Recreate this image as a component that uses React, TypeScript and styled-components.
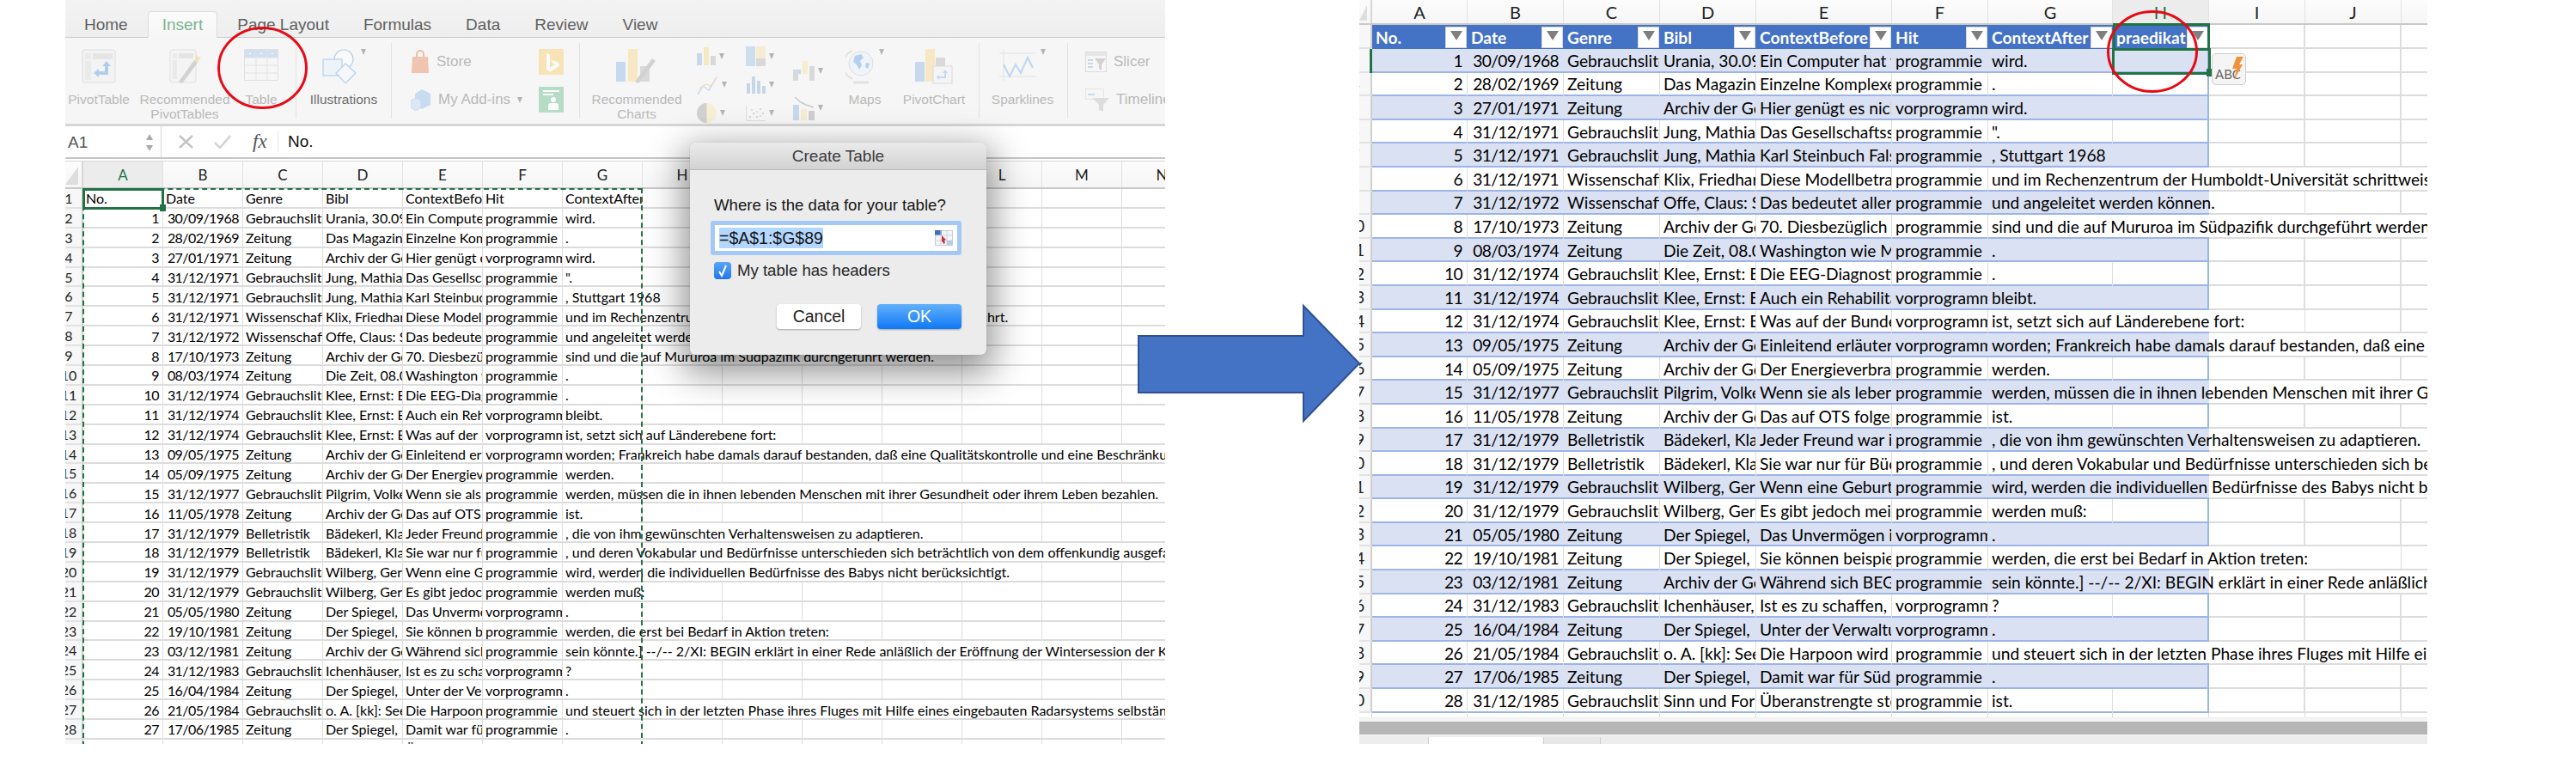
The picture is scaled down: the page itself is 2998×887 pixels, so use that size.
import React from 'react'
import styled, { createGlobalStyle } from 'styled-components'

const GlobalStyle = createGlobalStyle`
	html,
	body {
		margin: 0;
		padding: 0;
		background: #fff;
	}
	* {
		box-sizing: border-box;
	}
`

const UI_FONT = '"Liberation Sans", Arial, sans-serif'
const CELL_FONT = 'Lato, "Liberation Sans", sans-serif'
const GREEN = '#217346'
const GRID = '#dcdcdc'

type DataRow = [string, string, string, string, string, string]

const G = 'Gebrauchsliteratur'
const Z = 'Zeitung'
const W = 'Wissenschaft'
const B = 'Belletristik'
const P = 'programmie'
const V = 'vorprogramm'

const rows: DataRow[] = [
	['30/09/1968', G, 'Urania, 30.09.1968', 'Ein Computer hat w', P, 'wird.'],
	['28/02/1969', Z, 'Das Magazin, 1969', 'Einzelne Komplexe', P, '.'],
	['27/01/1971', Z, 'Archiv der Gegenwart', 'Hier genügt es nicht', V, 'wird.'],
	['31/12/1971', G, 'Jung, Mathias', 'Das Gesellschaftssystem', P, '".'],
	['31/12/1971', G, 'Jung, Mathias', 'Karl Steinbuch Falsch', P, ', Stuttgart 1968'],
	['31/12/1971', W, 'Klix, Friedhart', 'Diese Modellbetrachtung', P, 'und im Rechenzentrum der Humboldt-Universität schrittweise eingeführt.'],
	['31/12/1972', W, 'Offe, Claus: Strukturprobleme', 'Das bedeutet allerdings', P, 'und angeleitet werden können.'],
	['17/10/1973', Z, 'Archiv der Gegenwart', '70. Diesbezüglich wird', P, 'sind und die auf Mururoa im Südpazifik durchgeführt werden.'],
	['08/03/1974', Z, 'Die Zeit, 08.03.1974', 'Washington wie Moskau', P, '.'],
	['31/12/1974', G, 'Klee, Ernst: Euthanasie', 'Die EEG-Diagnostik', P, '.'],
	['31/12/1974', G, 'Klee, Ernst: Euthanasie', 'Auch ein Rehabilitand', V, 'bleibt.'],
	['31/12/1974', G, 'Klee, Ernst: Euthanasie', 'Was auf der Bundesebene', V, 'ist, setzt sich auf Länderebene fort:'],
	['09/05/1975', Z, 'Archiv der Gegenwart', 'Einleitend erläuterte', V, 'worden; Frankreich habe damals darauf bestanden, daß eine Qualitätskontrolle und eine Beschränkung'],
	['05/09/1975', Z, 'Archiv der Gegenwart', 'Der Energieverbrauch', P, 'werden.'],
	['31/12/1977', G, 'Pilgrim, Volker', 'Wenn sie als lebendige', P, 'werden, müssen die in ihnen lebenden Menschen mit ihrer Gesundheit oder ihrem Leben bezahlen.'],
	['11/05/1978', Z, 'Archiv der Gegenwart', 'Das auf OTS folgende', P, 'ist.'],
	['31/12/1979', B, 'Bädekerl, Klaus', 'Jeder Freund war ihr', P, ', die von ihm gewünschten Verhaltensweisen zu adaptieren.'],
	['31/12/1979', B, 'Bädekerl, Klaus', 'Sie war nur für Bücher', P, ', und deren Vokabular und Bedürfnisse unterschieden sich beträchtlich von dem offenkundig ausgefallenen'],
	['31/12/1979', G, 'Wilberg, Gerlinde', 'Wenn eine Geburt so', P, 'wird, werden die individuellen Bedürfnisse des Babys nicht berücksichtigt.'],
	['31/12/1979', G, 'Wilberg, Gerlinde', 'Es gibt jedoch meist', P, 'werden muß:'],
	['05/05/1980', Z, 'Der Spiegel,', 'Das Unvermögen ist', V, '.'],
	['19/10/1981', Z, 'Der Spiegel,', 'Sie können beispielsweise', P, 'werden, die erst bei Bedarf in Aktion treten:'],
	['03/12/1981', Z, 'Archiv der Gegenwart', 'Während sich BEGIN', P, 'sein könnte.] --/-- 2/XI: BEGIN erklärt in einer Rede anläßlich der Eröffnung der Wintersession der Knesset'],
	['31/12/1983', G, 'Ichenhäuser,', 'Ist es zu schaffen, dass', V, '?'],
	['16/04/1984', Z, 'Der Spiegel,', 'Unter der Verwaltung', V, '.'],
	['21/05/1984', G, 'o. A. [kk]: Seekrieg', 'Die Harpoon wird vor', P, 'und steuert sich in der letzten Phase ihres Fluges mit Hilfe eines eingebauten Radarsystems selbständig'],
	['17/06/1985', Z, 'Der Spiegel,', 'Damit war für Südafrika', P, '.'],
	['31/12/1985', G, 'Sinn und Form, 1985', 'Überanstrengte stets', P, 'ist.'],
]

const measureCtx = document.createElement('canvas').getContext('2d')

const textWidth = (text: string, size: number) => {
	if (!measureCtx) return text.length * size * 0.46
	measureCtx.font = `${size}px Lato`
	return measureCtx.measureText(text).width
}

const Page = styled.div`
	position: relative;
	display: flex;
	width: 2998px;
	height: 887px;
	padding-left: 76px;
	gap: 226px;
	overflow: hidden;
	background: #fff;
`

const LeftPanel = styled.div`
	position: relative;
	flex: none;
	width: 1280px;
	height: 866px;
	overflow: hidden;
	display: flex;
	flex-direction: column;
	font-family: ${UI_FONT};
`

const RightPanel = styled.div`
	position: relative;
	flex: none;
	width: 1243px;
	height: 866px;
	overflow: hidden;
	display: flex;
	flex-direction: column;
`

/* ---------- ribbon ---------- */

const TabBar = styled.div`
	flex: none;
	height: 44px;
	display: flex;
	align-items: flex-end;
	gap: 6px;
	padding-left: 5px;
	background: linear-gradient(#f3f3f3, #eeeeee);
	border-bottom: 1px solid #c9c9c9;
`

const Tab = styled.div<{ $active?: boolean }>`
	height: ${(p) => (p.$active ? '31px' : '30px')};
	padding: 0 16px;
	font-size: 19px;
	line-height: 30px;
	margin-bottom: ${(p) => (p.$active ? '-1px' : '0')};
	color: ${(p) => (p.$active ? '#7db391' : '#616161')};
	background: ${(p) => (p.$active ? 'linear-gradient(#fbfbfb, #f6f6f6)' : 'none')};
	border: 1px solid ${(p) => (p.$active ? '#dcdcdc' : 'transparent')};
	border-bottom: none;
	border-radius: 4px 4px 0 0;
`

const Ribbon = styled.div`
	flex: none;
	height: 103px;
	display: flex;
	background: #f6f6f6;
	border-bottom: 3px solid #d6d6d6;
`

const LargeItem = styled.div<{ $w: number }>`
	flex: none;
	width: ${(p) => p.$w}px;
	padding-top: 13px;
	text-align: center;
	font-size: 15.5px;
	line-height: 17px;
	color: #b9b9b9;
`

const LargeIcon = styled.div`
	height: 50px;
	display: flex;
	justify-content: center;
	align-items: flex-start;
	gap: 5px;
`

const ItemLabel = styled.div<{ $dark?: boolean }>`
	white-space: nowrap;
	color: ${(p) => (p.$dark ? '#6e6e6e' : '#b9b9b9')};
`

const RibbonSep = styled.div<{ $w: number }>`
	flex: none;
	width: ${(p) => p.$w}px;
	display: flex;
	justify-content: center;
	padding: 6px 0;
	&::before {
		content: '';
		width: 1px;
		background: #e2e2e2;
	}
`

const SmallColumn = styled.div<{ $w: number; $pad: number }>`
	flex: none;
	width: ${(p) => p.$w}px;
	padding-left: ${(p) => p.$pad}px;
	padding-top: 13px;
	display: flex;
	flex-direction: column;
	gap: 14px;
`

const SmallItem = styled.div`
	height: 30px;
	display: flex;
	align-items: center;
	gap: 8px;
	font-size: 17px;
	color: #b9b9b9;
	white-space: nowrap;
`

const ChartColumn = styled.div<{ $w: number; $top: number; $rowH: number; $left?: number }>`
	flex: none;
	width: ${(p) => p.$w}px;
	padding-top: ${(p) => p.$top}px;
	padding-left: ${(p) => p.$left || 0}px;
	display: grid;
	grid-auto-rows: ${(p) => p.$rowH}px;
	align-content: start;
`

const ChartItem = styled.div`
	display: flex;
	align-items: center;
	gap: 4px;
`

const Caret = styled.span`
	flex: none;
	width: 0;
	height: 0;
	border-left: 3.5px solid transparent;
	border-right: 3.5px solid transparent;
	border-top: 7px solid #b4b4b4;
`

const FadedIcon = styled.svg`
	flex: none;
	display: block;
	opacity: 0.62;
`

/* ---------- formula bar ---------- */

const FormulaBar = styled.div`
	flex: none;
	height: 36px;
	display: flex;
	align-items: center;
	background: #fff;
`

const NameBox = styled.div`
	flex: none;
	width: 112px;
	height: 100%;
	display: flex;
	align-items: center;
	justify-content: space-between;
	padding: 2px 9px 0 3px;
	font-size: 19px;
	color: #555;
	border-right: 1px solid #d6d6d6;
`

const Stepper = styled.div`
	display: flex;
	flex-direction: column;
	gap: 6px;
`

const StepArrow = styled.span<{ $up?: boolean }>`
	width: 0;
	height: 0;
	border-left: 4.5px solid transparent;
	border-right: 4.5px solid transparent;
	border-top: ${(p) => (p.$up ? 'none' : '7px solid #aaa')};
	border-bottom: ${(p) => (p.$up ? '7px solid #aaa' : 'none')};
`

const FormulaActions = styled.div`
	flex: none;
	width: 136px;
	height: 24px;
	display: flex;
	align-items: center;
	gap: 24px;
	padding-left: 20px;
	border-right: 1px solid #e4e4e4;
`

const FxLabel = styled.span`
	font-family: 'Liberation Serif', serif;
	font-style: italic;
	font-size: 23px;
	color: #555;
	margin-left: 1px;
`

const FormulaText = styled.div`
	padding-left: 11px;
	font-size: 19px;
	color: #111;
`

const FormulaRule = styled.div`
	flex: none;
	height: 5px;
	border-top: 2px solid #c6c6c6;
	border-bottom: 1px solid #d8d8d8;
`

/* ---------- sheet ---------- */

const HeaderStrip = styled.div<{ $h: number; $cols: string }>`
	flex: none;
	height: ${(p) => p.$h}px;
	display: grid;
	grid-template-columns: ${(p) => p.$cols};
	background: linear-gradient(#fcfcfc, #f6f6f6);
	border-bottom: 2px solid #c9c9c9;
`

const Corner = styled.div`
	position: relative;
	overflow: hidden;
	border-right: 2px solid #d6d6d6;
	padding: 6px 4px 3px 0;
	display: flex;
	&::before {
		content: '';
		flex: 1;
		background: #dedede;
		clip-path: polygon(100% 0, 100% 100%, 0 100%);
	}
`

const ColumnLetter = styled.div<{ $size: number; $active?: boolean }>`
	display: flex;
	align-items: center;
	justify-content: center;
	font-family: ${CELL_FONT};
	font-size: ${(p) => p.$size}px;
	color: ${(p) => (p.$active ? GREEN : '#222')};
	background: ${(p) => (p.$active ? '#ececec' : 'none')};
	border-right: 1px solid #e2e2e2;
`

const RowArea = styled.div`
	position: relative;
	flex: none;
`

const SheetRow = styled.div<{ $h: number; $cols: string; $head: number; $table: number; $band?: boolean }>`
	height: ${(p) => p.$h}px;
	display: grid;
	grid-template-columns: ${(p) => p.$cols};
	background:
		${(p) =>
			p.$table
				? `linear-gradient(#9db5e4, #9db5e4) ${p.$head}px 100% / ${p.$table}px 2px no-repeat,`
				: ''}
		${(p) =>
			p.$band ? `linear-gradient(#dae1f2, #dae1f2) ${p.$head}px 0 / ${p.$table}px 100% no-repeat,` : ''}
		linear-gradient(${GRID}, ${GRID}) 0 100% / 100% 2px no-repeat;
`

const RowHead = styled.div<{ $size: number }>`
	display: flex;
	align-items: center;
	overflow: hidden;
	font-family: ${CELL_FONT};
	font-size: ${(p) => p.$size}px;
	color: #222;
	background: #f7f7f7;
	border-right: 2px solid #cfcfcf;
	border-bottom: 2px solid #e2e2e2;
`

const RowNumber = styled.span<{ $center: number }>`
	flex: none;
	width: 40px;
	margin-left: ${(p) => p.$center - 20}px;
	text-align: center;
`

const Cell = styled.div<{ $size: number; $right?: boolean; $line: string; $span?: number; $edge?: boolean }>`
	grid-column: span ${(p) => p.$span || 1};
	display: flex;
	align-items: center;
	justify-content: ${(p) => (p.$right ? 'flex-end' : 'flex-start')};
	min-width: 0;
	padding: 0 ${(p) => Math.round(p.$size * 0.24)}px 1px ${(p) => Math.round(p.$size * 0.2)}px;
	overflow: hidden;
	white-space: nowrap;
	font-family: ${CELL_FONT};
	font-size: ${(p) => p.$size}px;
	letter-spacing: ${(p) => (p.$right ? '-0.035em' : 'normal')};
	color: #000;
	border-right: ${(p) => (p.$edge ? 2 : 1)}px solid ${(p) => p.$line};
`

const TableHeaderRow = styled.div<{ $cols: string }>`
	flex: none;
	height: 28px;
	display: grid;
	grid-template-columns: ${(p) => p.$cols};
	background: linear-gradient(${GRID}, ${GRID}) 0 100% / 100% 2px no-repeat;
`

const TableHeaderCell = styled.div`
	display: flex;
	align-items: center;
	justify-content: space-between;
	min-width: 0;
	padding-left: 4px;
	padding-right: 1px;
	overflow: hidden;
	white-space: nowrap;
	font-family: ${CELL_FONT};
	font-size: 19.2px;
	font-weight: 700;
	color: #fff;
	background: #4472c4;
`

const HeaderText = styled.span`
	flex: 1;
	min-width: 0;
	overflow: hidden;
`

const FilterButton = styled.span`
	flex: none;
	width: 25px;
	height: 25px;
	display: flex;
	align-items: center;
	justify-content: center;
	background: #fff;
	border: 1px solid #d8d8d8;
	&::before {
		content: '';
		margin-top: -3px;
		border-left: 7px solid transparent;
		border-right: 7px solid transparent;
		border-top: 11px solid #7f7f7f;
	}
`

const MarchingAnts = styled.div`
	position: absolute;
	top: -1px;
	left: 20px;
	width: 652px;
	height: 660px;
	border: 2px dashed ${GREEN};
`

const ActiveCell = styled.div`
	position: absolute;
	top: -1px;
	left: 20px;
	width: 95px;
	height: 25px;
	border: 3px solid ${GREEN};
	&::after {
		content: '';
		position: absolute;
		right: -5px;
		bottom: -5px;
		width: 7px;
		height: 8px;
		background: ${GREEN};
	}
`

const HeaderOutline = styled.div`
	position: absolute;
	top: 27px;
	left: 877px;
	width: 113px;
	height: 30px;
	border: 3px solid ${GREEN};
	border-bottom: none;
`

const SelectedCell = styled.div`
	position: absolute;
	top: 56px;
	left: 876px;
	width: 115px;
	height: 31px;
	border: 3px solid ${GREEN};
	&::after {
		content: '';
		position: absolute;
		right: -5px;
		bottom: -5px;
		width: 7px;
		height: 9px;
		background: ${GREEN};
	}
`

const LeadBar = styled.div`
	position: absolute;
	top: 57px;
	left: 12px;
	width: 3px;
	height: 28px;
	background: ${GREEN};
`

const AutoCorrect = styled.div`
	position: absolute;
	top: 62px;
	left: 992px;
	width: 40px;
	height: 37px;
	overflow: hidden;
	display: flex;
	align-items: flex-end;
	padding: 0 0 3px 3px;
	font-family: ${CELL_FONT};
	font-size: 15px;
	color: #666;
	background: #f5f5f5;
	border: 1px solid #cdcdcd;
	border-radius: 5px;
	svg {
		position: absolute;
		top: 3px;
		left: 22px;
	}
`

const GapRow = styled.div<{ $cols: string }>`
	flex: none;
	height: 6px;
	display: grid;
	grid-template-columns: ${(p) => p.$cols};
	background: #fff;
	border-bottom: 1px solid #eeeeee;
`

const GapCell = styled.div`
	border-right: 1px solid #dcdcdc;
`

const ScrollGutter = styled.div`
	flex: none;
	height: 4px;
	background: #f5f5f5;
`

const ScrollBar = styled.div`
	flex: none;
	height: 15px;
	background: #b6b6b6;
`

const SheetTabs = styled.div`
	flex: 1;
	display: flex;
	align-items: flex-end;
	padding-left: 80px;
	background: #ededed;
	border-top: 1px solid #f8f8f8;
`

const SheetTab = styled.div<{ $w: number; $active?: boolean }>`
	width: ${(p) => p.$w}px;
	height: 8px;
	background: ${(p) => (p.$active ? '#fff' : '#e8e8e8')};
	border-right: 1px solid #cfcfcf;
	border-left: ${(p) => (p.$active ? '1px solid #cfcfcf' : 'none')};
`

/* ---------- dialog ---------- */

const Dialog = styled.div`
	position: absolute;
	left: 727px;
	top: 166px;
	width: 345px;
	height: 247px;
	display: flex;
	flex-direction: column;
	background: #ececec;
	border-radius: 6px;
	box-shadow: 0 0 1px rgba(0, 0, 0, 0.35), 0 14px 42px 8px rgba(0, 0, 0, 0.42);
	font-family: ${UI_FONT};
`

const DialogTitle = styled.div`
	flex: none;
	height: 32px;
	display: flex;
	align-items: center;
	justify-content: center;
	font-size: 19px;
	color: #3c3c3c;
	background: linear-gradient(#ebebeb, #d2d2d2);
	border-bottom: 1px solid #b9b9b9;
	border-radius: 6px 6px 0 0;
`

const DialogBody = styled.div`
	flex: 1;
	display: flex;
	flex-direction: column;
	padding: 30px 29px 30px 28px;
`

const Prompt = styled.div`
	font-size: 18.6px;
	line-height: 22px;
	color: #161616;
	white-space: nowrap;
`

const RangeField = styled.div`
	margin: 7px 0 0 -4px;
	height: 40px;
	display: flex;
	align-items: center;
	justify-content: space-between;
	padding: 0 5px;
	border: 5px solid #a4c9f6;
	border-radius: 3px;
	background: #fff;
`

const RangeValue = styled.span`
	font-size: 19.5px;
	line-height: 24px;
	color: #161616;
	background: #b3d7ff;
`

const CheckRow = styled.div`
	margin-top: 7px;
	display: flex;
	align-items: center;
	gap: 7px;
	font-size: 18.6px;
	color: #262626;
	white-space: nowrap;
`

const CheckBox = styled.span`
	flex: none;
	width: 20px;
	height: 20px;
	display: flex;
	align-items: center;
	justify-content: center;
	border-radius: 4px;
	background: linear-gradient(#5aa5f8, #2176f0);
`

const ButtonRow = styled.div`
	margin-top: auto;
	display: flex;
	justify-content: flex-end;
	gap: 19px;
`

const DialogButton = styled.div<{ $primary?: boolean }>`
	width: 98px;
	height: 29px;
	display: flex;
	align-items: center;
	justify-content: center;
	font-size: 19.5px;
	border-radius: 4px;
	color: ${(p) => (p.$primary ? '#fff' : '#222')};
	background: ${(p) => (p.$primary ? 'linear-gradient(#62b1fb, #0f78f6)' : '#fff')};
	box-shadow: 0 1px 2px rgba(0, 0, 0, 0.3);
`

/* ---------- annotations ---------- */

const Annotation = styled.svg<{ $x: number; $y: number }>`
	position: absolute;
	left: ${(p) => p.$x}px;
	top: ${(p) => p.$y}px;
	overflow: visible;
`

const RedRing = ({ x, y, w, h }: { x: number; y: number; w: number; h: number }) => (
	<Annotation $x={x} $y={y} width={w} height={h} viewBox={`0 0 ${w} ${h}`} fill="none">
		<ellipse cx={w / 2} cy={h / 2} rx={w / 2 - 1.5} ry={h / 2 - 1.5} stroke="#e60a14" strokeWidth={3} />
	</Annotation>
)

/* ---------- ribbon drawings ---------- */

const PivotIcon = () => (
	<FadedIcon width={40} height={40} viewBox="0 0 40 40">
		<rect x="1" y="1" width="38" height="38" rx="2" fill="#f2f2f2" stroke="#cfcfcf" />
		<rect x="13" y="5" width="23" height="7" fill="#dcdcdc" />
		<rect x="4" y="5" width="7" height="7" fill="#e3e3e3" />
		<rect x="4" y="14" width="7" height="22" fill="#e3e3e3" />
		<path d="M29 14l5 6h-3v10H20v3l-6-5 6-5v3h7v-6h-3z" fill="#86b6e6" />
	</FadedIcon>
)

const RecommendedIcon = () => (
	<FadedIcon width={40} height={40} viewBox="0 0 40 40">
		<rect x="3" y="1" width="30" height="38" rx="2" fill="#f4f4f4" stroke="#d4d4d4" />
		<rect x="13" y="5" width="17" height="6" fill="#dcdcdc" />
		<rect x="6" y="5" width="5" height="6" fill="#e3e3e3" />
		<rect x="6" y="13" width="5" height="22" fill="#e3e3e3" />
		<path d="M13 38l18-25 4 3-18 24z" fill="#bdbdbd" />
		<path d="M33 5l2 4 4 1-3 3-1 4-3-3z" fill="#f4d58a" />
	</FadedIcon>
)

const TableIcon = () => (
	<FadedIcon width={40} height={37} viewBox="0 0 40 37">
		<rect x="0.5" y="0.5" width="39" height="36" fill="#f7f7f7" stroke="#d4d4d4" />
		<rect x="1" y="1" width="38" height="9" fill="#b9d2f0" />
		<path d="M14 1v35M27 1v35M1 10h38M1 19h38M1 28h38" stroke="#d6d6d6" fill="none" />
		<path d="M7 4l1.5 2h-3zM20 4l1.5 2h-3zM33 4l1.5 2h-3z" fill="#fff" />
	</FadedIcon>
)

const ShapesIcon = () => (
	<FadedIcon width={40} height={40} viewBox="0 0 40 40">
		<circle cx="25" cy="12" r="11" fill="#fdfdfd" stroke="#8fb9e8" strokeWidth="1.2" />
		<rect x="1" y="12" width="22" height="19" fill="#eaf2fb" stroke="#8fb9e8" strokeWidth="1.2" />
		<path d="M27 17l12 11-12 12-11-12z" fill="#f5f9fd" stroke="#8fb9e8" strokeWidth="1.2" />
	</FadedIcon>
)

const BagIcon = () => (
	<FadedIcon width={22} height={28} viewBox="0 0 22 28">
		<path d="M7 9V5a4 4 0 018 0v4" fill="none" stroke="#e69a7d" strokeWidth="2" />
		<path d="M2 8h18l1 19H1z" fill="#eea488" />
	</FadedIcon>
)

const CubesIcon = () => (
	<FadedIcon width={24} height={25} viewBox="0 0 24 25">
		<path d="M13 0l10 5v13l-10 5-8-4V5z" fill="#aecbee" />
		<path d="M0 13l6-3 6 3v8l-6 4-6-4z" fill="#d0e1f5" stroke="#a8c6ea" />
	</FadedIcon>
)

const BingIcon = () => (
	<FadedIcon width={29} height={30} viewBox="0 0 29 30">
		<rect width="29" height="30" fill="#f9d98e" />
		<path d="M9 5l4 1.500v15l6-3.500-3-1.500-1.500-4 9 3.500v4L13 27l-4-3z" fill="#fff" />
	</FadedIcon>
)

const PeopleIcon = () => (
	<FadedIcon width={29} height={30} viewBox="0 0 29 30">
		<rect width="29" height="30" fill="#8fccab" />
		<path d="M5 5h19M5 9h12" stroke="#fff" strokeWidth="2" />
		<circle cx="17" cy="15" r="3" fill="#fff" />
		<path d="M11 27v-5a3 3 0 013-3h6a3 3 0 013 3v5z" fill="#fff" />
	</FadedIcon>
)

const RecommendedChartIcon = () => (
	<FadedIcon width={48} height={40} viewBox="0 0 48 40">
		<rect x="0" y="15" width="11" height="23" fill="#a9c8ec" />
		<rect x="14" y="0" width="11" height="38" fill="#f8dfa6" />
		<rect x="28" y="20" width="11" height="18" fill="#c8c8c8" />
		<path d="M22 38l20-27 4 3-20 26z" fill="#bdbdbd" />
	</FadedIcon>
)

const BarsIcon = () => (
	<FadedIcon width={22} height={21} viewBox="0 0 22 21">
		<rect x="0" y="7" width="6" height="14" fill="#a9c8ec" />
		<rect x="8" y="0" width="6" height="21" fill="#f8dfa6" />
		<rect x="16" y="10" width="6" height="11" fill="#c8c8c8" />
	</FadedIcon>
)

const StackIcon = () => (
	<FadedIcon width={23} height={23} viewBox="0 0 23 23">
		<rect x="0" y="0" width="11" height="23" fill="#b7cfea" />
		<rect x="12" y="0" width="11" height="14" fill="#f8e6bd" />
		<rect x="12" y="14" width="11" height="9" fill="#c8c8c8" />
	</FadedIcon>
)

const LineChartIcon = () => (
	<FadedIcon width={25} height={24} viewBox="0 0 25 24">
		<path d="M1 23l6-10 7 5 9-15" fill="none" stroke="#a9c8ec" strokeWidth="1.5" />
		<path d="M3 16l8-5 5 2 7-9" fill="none" stroke="#f3cf9c" strokeWidth="1.2" />
	</FadedIcon>
)

const ColumnIcon = () => (
	<FadedIcon width={23} height={20} viewBox="0 0 23 20">
		<path d="M1 20V8h4v12zM7 20V0h4v20zM13 20V5h4v15zM19 20v-9h4v9z" fill="#a9c3de" />
	</FadedIcon>
)

const PieIcon = () => (
	<FadedIcon width={23} height={23} viewBox="0 0 23 23">
		<circle cx="11.500" cy="11.500" r="11.500" fill="#faedc4" />
		<path d="M11.500 0a11.500 11.500 0 000 23z" fill="#bcbcbc" />
	</FadedIcon>
)

const ScatterIcon = () => (
	<FadedIcon width={23} height={18} viewBox="0 0 23 18">
		<path d="M.5 0v17.500H23" fill="none" stroke="#d4d4d4" />
		<path d="M4 12h2v2H4zM8 8h2v2H8zM12 12h2v2h-2zM16 3h2v2h-2zM19 8h2v2h-2z" fill="#a9c8ec" />
		<path d="M6 4h2v2H6zM12 6h2v2h-2zM16 11h2v2h-2z" fill="#f3cf9c" />
	</FadedIcon>
)

const WaterfallIcon = () => (
	<FadedIcon width={25} height={23} viewBox="0 0 25 23">
		<rect x="0" y="10" width="6" height="13" fill="#c8c8c8" />
		<rect x="6" y="10" width="3" height="5" fill="#a9c8ec" />
		<rect x="11" y="0" width="6" height="15" fill="#f8e6bd" />
		<rect x="19" y="6" width="6" height="17" fill="#c8c8c8" />
	</FadedIcon>
)

const ParetoIcon = () => (
	<FadedIcon width={25} height={28} viewBox="0 0 25 28">
		<rect x="0" y="10" width="7" height="18" fill="#a9c8ec" />
		<rect x="9" y="15" width="7" height="13" fill="#f8e6bd" />
		<rect x="18" y="17" width="7" height="11" fill="#b8b8b8" />
		<path d="M2 1l7 6 6 3 9 3" fill="none" stroke="#b0b0b0" strokeWidth="1.5" />
	</FadedIcon>
)

const GlobeIcon = () => (
	<FadedIcon width={34} height={41} viewBox="0 0 34 41">
		<path d="M8 2a18 18 0 000 33" fill="none" stroke="#d6d6d6" strokeWidth="2" />
		<circle cx="18" cy="17" r="14" fill="#eaf3fc" stroke="#d0d0d0" />
		<path d="M11 8l7-2 3 4-4 4 2 5-3 5-3-6-4-3zM24 16l4 1-2 6-3-2z" fill="#8cb9e8" />
		<path d="M9 39h18" stroke="#d6d6d6" strokeWidth="3" />
	</FadedIcon>
)

const PivotChartIcon = () => (
	<FadedIcon width={44} height={41} viewBox="0 0 44 41">
		<rect x="0" y="15" width="11" height="23" fill="#a9c8ec" />
		<rect x="12" y="0" width="11" height="38" fill="#f8dfa6" />
		<rect x="24" y="10" width="11" height="28" fill="#c8c8c8" />
		<rect x="21" y="20" width="22" height="20" fill="#f4f4f4" stroke="#c8c8c8" />
		<path d="M35 24l3 4h-2v6h-8v2l-3-3 3-3v2h6v-4h-2z" fill="#a9c8ec" />
	</FadedIcon>
)

const SparkIcon = () => (
	<FadedIcon width={43} height={37} viewBox="0 0 43 37">
		<path d="M5 0v37M0 5h43M0 32h43" stroke="#d6d6d6" fill="none" />
		<path d="M5 18l7 14 7-14 6 10 8-18 6 12" fill="none" stroke="#9cc3ec" strokeWidth="2" />
	</FadedIcon>
)

const SlicerIcon = () => (
	<FadedIcon width={25} height={24} viewBox="0 0 25 24">
		<rect x="0.500" y="0.500" width="24" height="23" fill="#f6f6f6" stroke="#cfcfcf" />
		<rect x="1" y="1" width="23" height="4" fill="#dcdcdc" />
		<path d="M3 9h6v2H3zM3 13h6v2H3zM3 17h6v2H3z" fill="#a9c8ec" />
		<path d="M11 8h13l-5 7v7l-3-2v-5z" fill="#bdbdbd" />
	</FadedIcon>
)

const TimelineIcon = () => (
	<FadedIcon width={28} height={27} viewBox="0 0 28 27">
		<rect x="0.500" y="0.500" width="21" height="12" fill="#f6f6f6" stroke="#dcdcdc" />
		<path d="M3 6h8v2H3z" fill="#a9c8ec" />
		<path d="M8 11h20l-7 8v8l-5-2v-6z" fill="#cfcfcf" />
	</FadedIcon>
)

const CrossIcon = () => (
	<svg width={17} height={16} viewBox="0 0 17 16" fill="none" stroke="#c4c4c4" strokeWidth={2.5}>
		<path d="M1 1l15 14M16 1L1 15" />
	</svg>
)

const TickIcon = () => (
	<svg width={20} height={16} viewBox="0 0 20 16" fill="none" stroke="#d2d2d2" strokeWidth={2.5}>
		<path d="M1 9l6 6L19 1" />
	</svg>
)

const RangePickerIcon = () => (
	<svg width={21} height={18} viewBox="0 0 21 18">
		<rect x="0.500" y="0.500" width="20" height="17" fill="#f3f6fa" stroke="#c5ccd6" />
		<rect x="0" y="0" width="8" height="6" fill="#3d6fb8" />
		<path d="M7 0v18M14 0v18M0 6h21M0 12h21" stroke="#cfd6e0" />
		<path d="M8 6l5 5-2 1 1 3-2 1-1-3-1 1z" fill="#c8343c" />
		<rect x="14" y="12" width="7" height="6" fill="#b9cde8" />
	</svg>
)

const Ribbons = () => (
	<Ribbon>
		<LargeItem $w={78}>
			<LargeIcon>
				<PivotIcon />
			</LargeIcon>
			<ItemLabel>PivotTable</ItemLabel>
		</LargeItem>
		<LargeItem $w={122}>
			<LargeIcon>
				<RecommendedIcon />
			</LargeIcon>
			<ItemLabel>Recommended</ItemLabel>
			<ItemLabel>PivotTables</ItemLabel>
		</LargeItem>
		<LargeItem $w={56}>
			<LargeIcon>
				<TableIcon />
			</LargeIcon>
			<ItemLabel>Table</ItemLabel>
		</LargeItem>
		<RibbonSep $w={24} />
		<LargeItem $w={88}>
			<LargeIcon>
				<ShapesIcon />
				<Caret />
			</LargeIcon>
			<ItemLabel $dark>Illustrations</ItemLabel>
		</LargeItem>
		<RibbonSep $w={22} />
		<SmallColumn $w={152} $pad={12}>
			<SmallItem>
				<BagIcon />
				Store
			</SmallItem>
			<SmallItem>
				<CubesIcon />
				My Add-ins
				<Caret />
			</SmallItem>
		</SmallColumn>
		<SmallColumn $w={46} $pad={9}>
			<SmallItem>
				<BingIcon />
			</SmallItem>
			<SmallItem>
				<PeopleIcon />
			</SmallItem>
		</SmallColumn>
		<RibbonSep $w={20} />
		<LargeItem $w={114}>
			<LargeIcon>
				<RecommendedChartIcon />
			</LargeIcon>
			<ItemLabel>Recommended</ItemLabel>
			<ItemLabel>Charts</ItemLabel>
		</LargeItem>
		<ChartColumn $w={70} $top={5} $rowH={33} $left={13}>
			<ChartItem>
				<BarsIcon />
				<Caret />
			</ChartItem>
			<ChartItem>
				<LineChartIcon />
				<Caret />
			</ChartItem>
			<ChartItem>
				<PieIcon />
				<Caret />
			</ChartItem>
		</ChartColumn>
		<ChartColumn $w={55} $top={5} $rowH={33}>
			<ChartItem>
				<StackIcon />
				<Caret />
			</ChartItem>
			<ChartItem>
				<ColumnIcon />
				<Caret />
			</ChartItem>
			<ChartItem>
				<ScatterIcon />
				<Caret />
			</ChartItem>
		</ChartColumn>
		<ChartColumn $w={52} $top={17} $rowH={43}>
			<ChartItem>
				<WaterfallIcon />
				<Caret />
			</ChartItem>
			<ChartItem>
				<ParetoIcon />
				<Caret />
			</ChartItem>
		</ChartColumn>
		<LargeItem $w={63}>
			<LargeIcon>
				<GlobeIcon />
				<Caret />
			</LargeIcon>
			<ItemLabel>Maps</ItemLabel>
		</LargeItem>
		<LargeItem $w={98}>
			<LargeIcon>
				<PivotChartIcon />
			</LargeIcon>
			<ItemLabel>PivotChart</ItemLabel>
		</LargeItem>
		<RibbonSep $w={6} />
		<LargeItem $w={96}>
			<LargeIcon>
				<SparkIcon />
				<Caret />
			</LargeIcon>
			<ItemLabel>Sparklines</ItemLabel>
		</LargeItem>
		<RibbonSep $w={8} />
		<SmallColumn $w={110} $pad={17}>
			<SmallItem>
				<SlicerIcon />
				Slicer
			</SmallItem>
			<SmallItem>
				<TimelineIcon />
				Timeline
			</SmallItem>
		</SmallColumn>
	</Ribbon>
)

/* ---------- rows ---------- */

interface SheetProps {
	widths: number[]
	head: number
	rowH: number
	size: number
	center: number
	table?: boolean
	count: number
}

const toTemplate = (head: number, widths: number[]) => `${head}px ${widths.map((w) => `${w}px`).join(' ')}`

const SheetRows = ({ widths, head, rowH, size, center, table, count }: SheetProps) => {
	const template = toTemplate(head, widths)
	const tableWidth = table ? widths.slice(0, 8).reduce((a, b) => a + b, 0) : 0
	return (
		<>
			{rows.slice(0, count).map((row, i) => {
				const band = !!table && i % 2 === 0
				const [date, genre, bibl, before, hit, after] = row
				const lineFor = (col: number) => {
					if (!table || col > 7) return '#dedede'
					if (col === 7) return '#9db5e4'
					return band ? 'transparent' : '#dedede'
				}
				const leading = [genre, bibl, before, hit]
				// the text after the hit runs on over the empty cells to its right
				const needed = textWidth(after, size) + size * 0.4
				let span = 1
				let room = widths[6]
				while (room < needed && 6 + span < widths.length) {
					room += widths[6 + span]
					span += 1
				}
				const lastCol = 6 + span - 1
				const rest = widths.slice(lastCol + 1).map((_, k) => lastCol + 1 + k)
				return (
					<SheetRow key={i} $h={rowH} $cols={template} $head={head} $table={tableWidth} $band={band}>
						<RowHead $size={size}>
							<RowNumber $center={center}>{i + 2 + (table ? 1 : 0)}</RowNumber>
						</RowHead>
						<Cell $size={size} $right $line={lineFor(0)}>
							{i + 1}
						</Cell>
						<Cell $size={size} $right $line={lineFor(1)}>
							{date}
						</Cell>
						{leading.map((text, k) => (
							<Cell key={k} $size={size} $line={lineFor(2 + k)}>
								{text}
							</Cell>
						))}
						<Cell $size={size} $line={lineFor(lastCol)} $span={span}>
							{after}
						</Cell>
						{rest.map((col) => (
							<Cell key={col} $size={size} $line={lineFor(col)} $edge={table && col >= 7} />
						))}
					</SheetRow>
				)
			})}
		</>
	)
}

const leftWidths = Array.from({ length: 14 }, () => 93)
const rightWidths = [111, 112, 112, 112, 158, 112, 145, 112, 112, 112, 112]
const headerTitles = ['No.', 'Date', 'Genre', 'Bibl', 'ContextBefore', 'Hit', 'ContextAfter', 'praedikat']

const App = () => {
	const leftTemplate = toTemplate(21, leftWidths)
	const rightTemplate = toTemplate(15, rightWidths)
	return (
		<Page>
			<GlobalStyle />
			<LeftPanel>
				<TabBar>
					<Tab>Home</Tab>
					<Tab $active>Insert</Tab>
					<Tab>Page Layout</Tab>
					<Tab>Formulas</Tab>
					<Tab>Data</Tab>
					<Tab>Review</Tab>
					<Tab>View</Tab>
				</TabBar>
				<Ribbons />
				<FormulaBar>
					<NameBox>
						A1
						<Stepper>
							<StepArrow $up />
							<StepArrow />
						</Stepper>
					</NameBox>
					<FormulaActions>
						<CrossIcon />
						<TickIcon />
						<FxLabel>fx</FxLabel>
					</FormulaActions>
					<FormulaText>No.</FormulaText>
				</FormulaBar>
				<FormulaRule />
				<HeaderStrip $h={32} $cols={leftTemplate}>
					<Corner />
					{leftWidths.map((_, i) => (
						<ColumnLetter key={i} $size={17} $active={i === 0}>
							{String.fromCharCode(65 + i)}
						</ColumnLetter>
					))}
				</HeaderStrip>
				<RowArea>
					<SheetRow $h={22.9} $cols={leftTemplate} $head={21} $table={0}>
						<RowHead $size={16}>
							<RowNumber $center={4}>1</RowNumber>
						</RowHead>
						{['No.', 'Date', 'Genre', 'Bibl', 'ContextBefore', 'Hit', 'ContextAfter'].map((t) => (
							<Cell key={t} $size={16} $line="#dedede">
								{t}
							</Cell>
						))}
						{leftWidths.slice(7).map((_, i) => (
							<Cell key={i} $size={16} $line="#dedede" />
						))}
					</SheetRow>
					<SheetRows widths={leftWidths} head={21} rowH={22.9} size={16} center={4} count={28} />
					<MarchingAnts />
					<ActiveCell />
				</RowArea>
				<Dialog>
					<DialogTitle>Create Table</DialogTitle>
					<DialogBody>
						<Prompt>Where is the data for your table?</Prompt>
						<RangeField>
							<RangeValue>=$A$1:$G$89</RangeValue>
							<RangePickerIcon />
						</RangeField>
						<CheckRow>
							<CheckBox>
								<svg width={12} height={15} viewBox="0 0 12 15" fill="none" stroke="#fff" strokeWidth={2}>
									<path d="M2 8l3 5 5-12" />
								</svg>
							</CheckBox>
							My table has headers
						</CheckRow>
						<ButtonRow>
							<DialogButton>Cancel</DialogButton>
							<DialogButton $primary>OK</DialogButton>
						</ButtonRow>
					</DialogBody>
				</Dialog>
			</LeftPanel>

			<RightPanel>
				<HeaderStrip $h={29} $cols={rightTemplate}>
					<Corner />
					{rightWidths.map((_, i) => (
						<ColumnLetter key={i} $size={20} $active={i === 7}>
							{String.fromCharCode(65 + i)}
						</ColumnLetter>
					))}
				</HeaderStrip>
				<RowArea>
					<TableHeaderRow $cols={rightTemplate}>
						<RowHead $size={19.2}>
							<RowNumber $center={-5}>1</RowNumber>
						</RowHead>
						{headerTitles.map((t) => (
							<TableHeaderCell key={t}>
								<HeaderText>{t}</HeaderText>
								<FilterButton />
							</TableHeaderCell>
						))}
						{rightWidths.slice(8).map((_, i) => (
							<Cell key={i} $size={19.2} $line="#dedede" $edge />
						))}
					</TableHeaderRow>
					<SheetRows widths={rightWidths} head={15} rowH={27.6} size={19.2} center={-5} table count={28} />
				</RowArea>
				<GapRow $cols={rightTemplate}>
					<GapCell />
					{rightWidths.map((_, i) => (
						<GapCell key={i} />
					))}
				</GapRow>
				<ScrollGutter />
				<ScrollBar />
				<SheetTabs>
					<SheetTab $w={135} $active />
					<SheetTab $w={66} />
				</SheetTabs>
				<LeadBar />
				<HeaderOutline />
				<SelectedCell />
				<AutoCorrect>
					ABC
					<svg width={14} height={27} viewBox="0 0 14 27">
						<path d="M6 0h8L9 9h4L3 27l3-13H1z" fill="#f0923a" />
					</svg>
				</AutoCorrect>
			</RightPanel>

			<Annotation $x={1324} $y={355} width={260} height={137} viewBox="0 0 260 137">
				<path d="M1 36h192V1l65 67-65 67v-33H1z" fill="#4472c4" stroke="#2f528f" strokeWidth={2} />
			</Annotation>
			<RedRing x={253} y={31} w={105} h={96} />
			<RedRing x={2452} y={12} w={106} h={96} />
		</Page>
	)
}

export default App
